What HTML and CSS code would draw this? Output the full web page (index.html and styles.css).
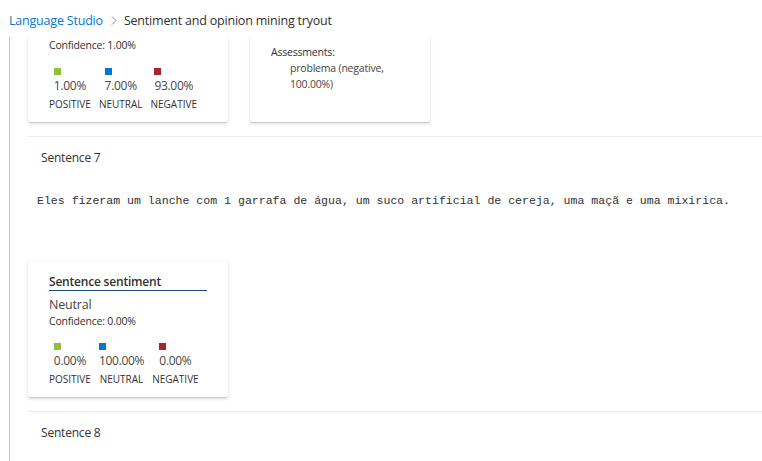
FILE: index.html
```html
<!DOCTYPE html>
<html lang="pt">
<head>
<meta charset="utf-8">
<title>Sentiment and opinion mining tryout</title>
<link rel="stylesheet" href="styles.css">
</head>
<body>
<nav class="breadcrumb">
  <a class="crumb-link" href="#">Language Studio</a>
  <svg class="chev" width="6" height="9" viewBox="0 0 6 9"><polyline points="1,0.5 5,4.5 1,8.5" fill="none" stroke="#8a8886" stroke-width="1"/></svg>
  <span class="crumb-current">Sentiment and opinion mining tryout</span>
</nav>
<main class="scroll">
  <div class="cards cards-top">
    <div class="card card-sent">
      <div class="conf">Confidence: 1.00%</div>
      <div class="scores">
        <div class="score"><div class="val"><span class="sq pos"></span><span class="pct">1.00%</span></div><span class="lbl">POSITIVE</span></div>
        <div class="score"><div class="val"><span class="sq neu"></span><span class="pct">7.00%</span></div><span class="lbl">NEUTRAL</span></div>
        <div class="score"><div class="val"><span class="sq neg"></span><span class="pct">93.00%</span></div><span class="lbl">NEGATIVE</span></div>
      </div>
    </div>
    <div class="card card-opinion">
      <div class="assess-label">Assessments:</div>
      <div class="assess-item">problema (negative, 100.00%)</div>
    </div>
  </div>

  <section class="sentence">
    <div class="sentence-title">Sentence 7</div>
    <pre class="sentence-text">Eles fizeram um lanche com 1 garrafa de água, um suco artificial de cereja, uma maçã e uma mixirica.</pre>
    <div class="cards cards-sentence">
      <div class="card card-sent">
        <div class="card-title">Sentence sentiment</div>
        <div class="sentiment">Neutral</div>
        <div class="conf">Confidence: 0.00%</div>
        <div class="scores">
          <div class="score"><div class="val"><span class="sq pos"></span><span class="pct">0.00%</span></div><span class="lbl">POSITIVE</span></div>
          <div class="score"><div class="val"><span class="sq neu"></span><span class="pct">100.00%</span></div><span class="lbl">NEUTRAL</span></div>
          <div class="score"><div class="val"><span class="sq neg"></span><span class="pct">0.00%</span></div><span class="lbl">NEGATIVE</span></div>
        </div>
      </div>
    </div>
  </section>

  <section class="sentence">
    <div class="sentence-title">Sentence 8</div>
  </section>
</main>
</body>
</html>
```

FILE: styles.css
```css
* { box-sizing: border-box; }
html, body { margin: 0; height: 100%; }
body {
  font-family: "Open Sans", "Noto Sans", sans-serif;
  color: #323130;
  background: #ffffff;
  overflow: hidden;
}

.breadcrumb {
  height: 37px;
  padding: 3px 0 0 9px;
  display: flex;
  align-items: center;
  font-size: 12.5px;
  letter-spacing: -0.2px;
}
.crumb-link { color: #0078d4; text-decoration: none; }
.chev { margin: 1px 7px 0 8px; }
.crumb-current { color: #323130; }

.scroll {
  margin-left: 9px;
  border-left: 1px solid #c8c6c4;
  height: calc(100vh - 37px);
  overflow: hidden;
  padding-left: 18px;
}

.cards { display: flex; gap: 22px; align-items: stretch; }
.cards-top { margin-bottom: 14px; }
.cards-sentence { margin-bottom: 14px; }

.card {
  background: #fff;
  box-shadow: 0 1.6px 3.6px rgba(0,0,0,0.13), 0 0.3px 0.9px rgba(0,0,0,0.11);
  border-radius: 2px;
}
.card-sent { width: 200px; padding: 0 21px 11px 21px; }
.cards-top .card-sent { padding-top: 1px; }
.cards-sentence .card-sent { padding-top: 13px; }
.card-opinion { width: 180px; padding: 7px 21px 0 21px; }

.card-title {
  font-size: 12px;
  font-weight: 600;
  line-height: 16px;
  letter-spacing: -0.2px;
  border-bottom: 1.5px solid #1b4f7a;
  color: #323130;
}
.sentiment { font-size: 12.5px; line-height: 18px; margin-top: 5px; color: #484644; letter-spacing: -0.2px; }
.conf { font-size: 10.5px; line-height: 15px; color: #323130; letter-spacing: -0.2px; }

.scores { display: flex; gap: 8px; margin-top: 15px; }
.cards-sentence .scores { margin-top: 14px; }
.score { display: flex; flex-direction: column; align-items: center; }
.val { display: flex; flex-direction: column; align-items: flex-start; }
.sq { width: 7px; height: 7px; display: block; }
.sq.pos { background: #92c03a; }
.sq.neu { background: #0078d4; }
.sq.neg { background: #a4262c; }
.pct { font-size: 12px; line-height: 16px; margin-top: 3px; color: #484644; letter-spacing: -0.3px; }
.lbl { font-size: 10px; line-height: 14px; margin-top: 3px; color: #323130; letter-spacing: 0; }

.assess-label { font-size: 10.5px; line-height: 16px; color: #323130; letter-spacing: -0.2px; }
.assess-item { font-size: 10.5px; line-height: 16px; color: #484644; padding-left: 19px; letter-spacing: -0.2px; }

.sentence { border-top: 1px solid #edebe9; padding-top: 13px; }
.sentence-title { padding-left: 13px; font-size: 12px; line-height: 16px; color: #323130; letter-spacing: -0.2px; }
.sentence-text {
  margin: 27px 0 52px 9px;
  font-family: "Liberation Mono", "DejaVu Sans Mono", monospace;
  font-size: 11.55px;
  line-height: 16px;
  color: #323130;
  white-space: pre;
}
```
